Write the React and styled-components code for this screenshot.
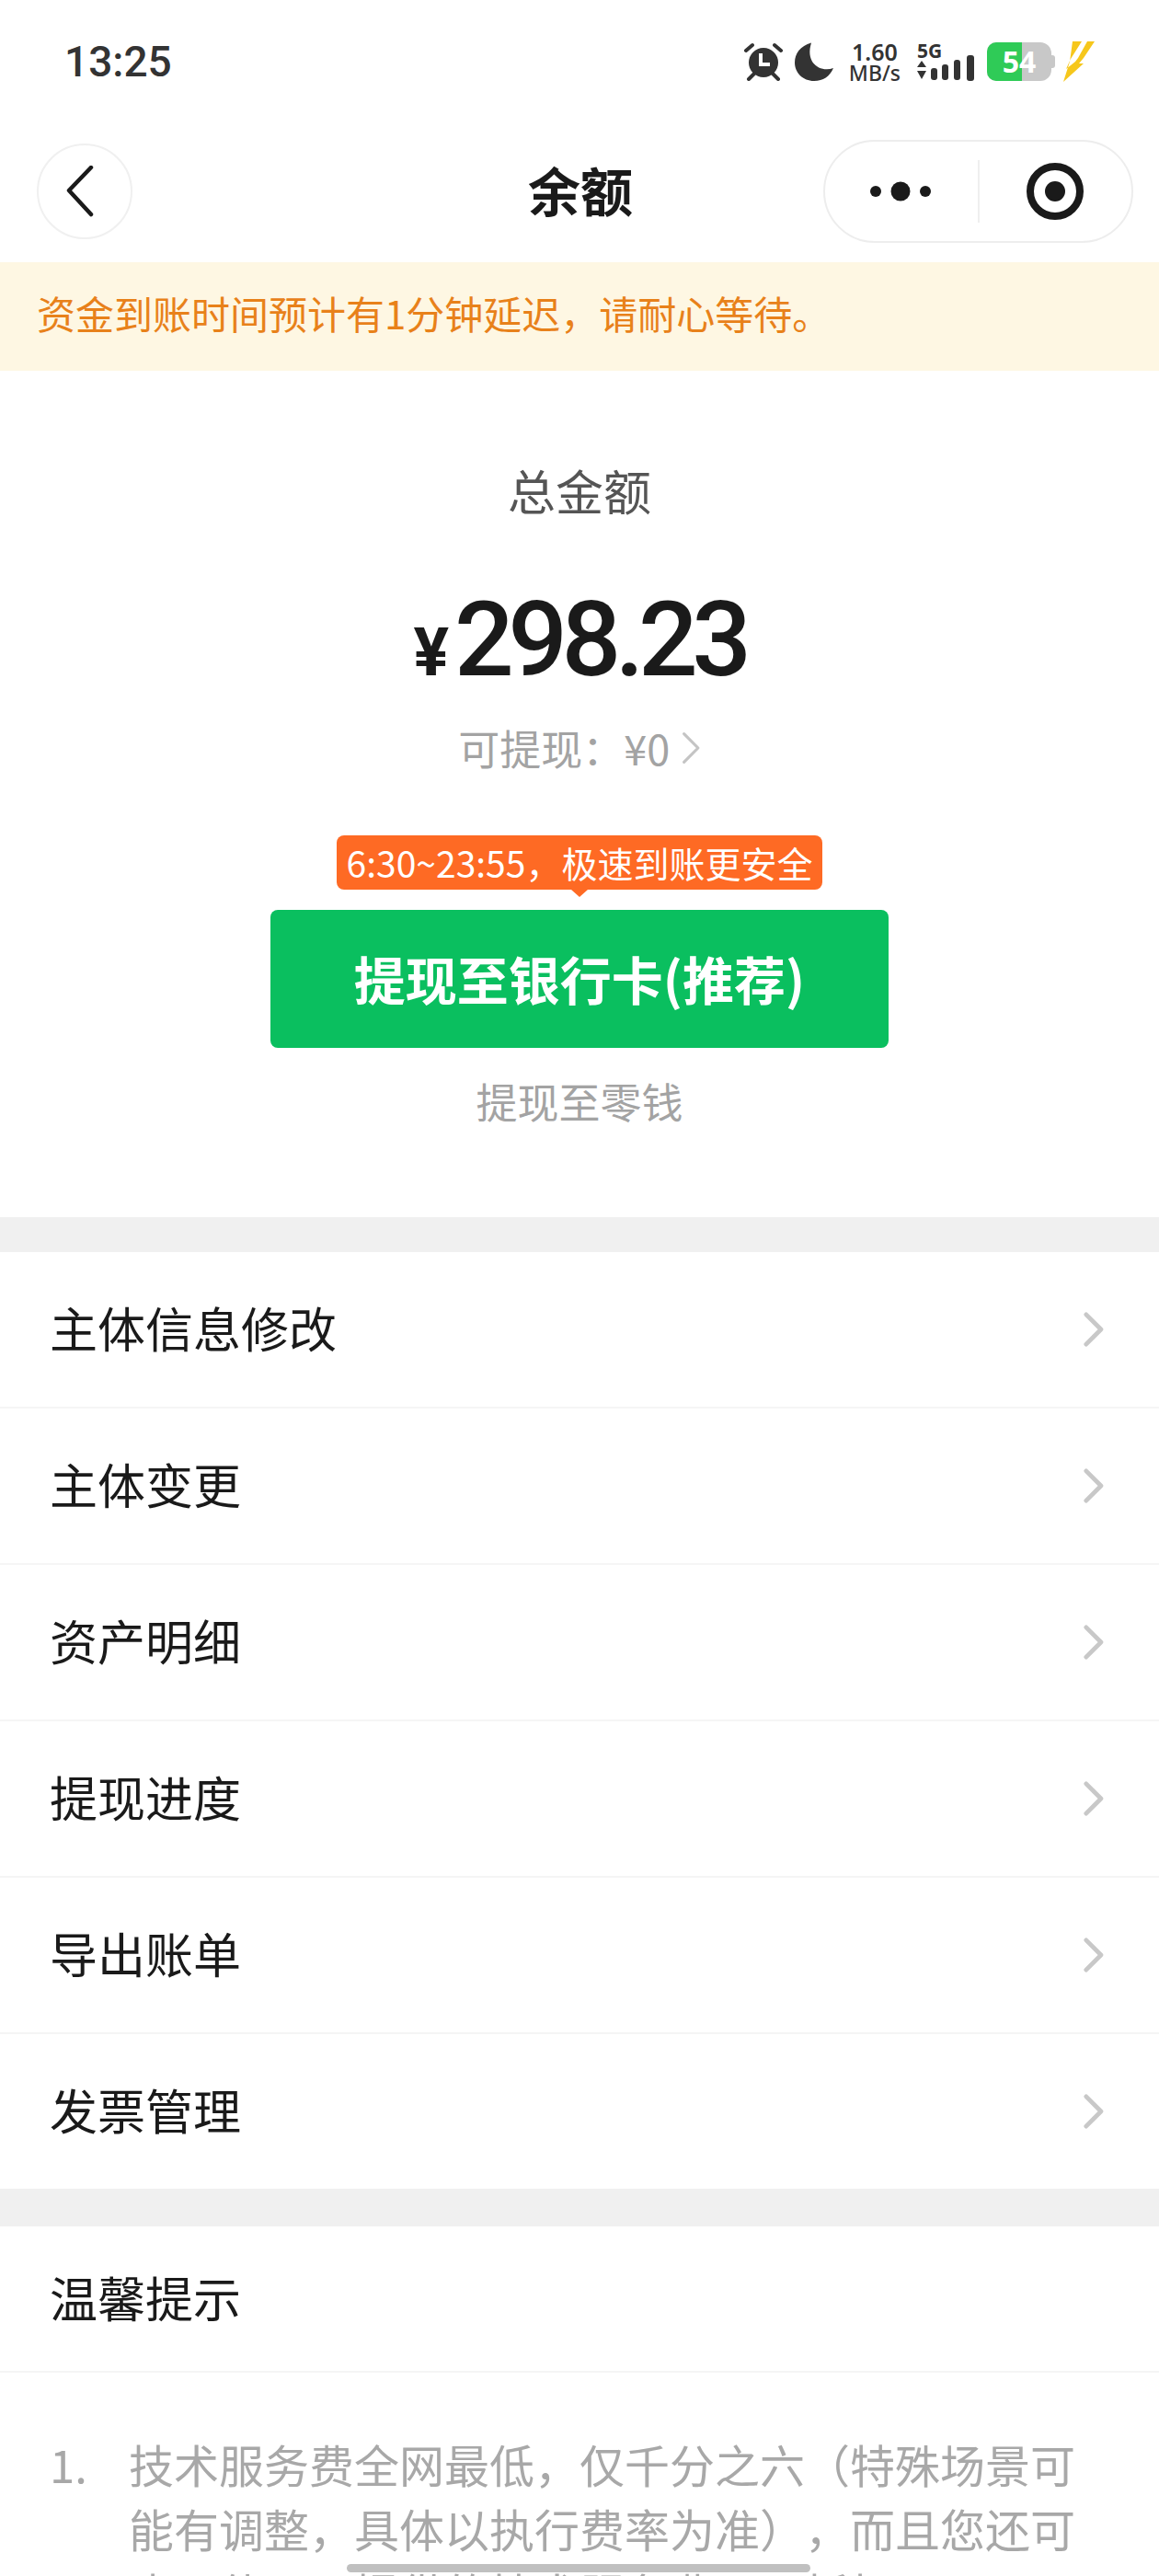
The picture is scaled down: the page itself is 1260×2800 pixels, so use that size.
import styled, { createGlobalStyle } from "styled-components";

const MENU_ITEMS = ["主体信息修改", "主体变更", "资产明细", "提现进度", "导出账单", "发票管理"];

const GlobalStyle = createGlobalStyle`
  html, body {
    margin: 0;
    padding: 0;
    background: #fff;
  }
  body {
    font-family: "Noto Sans CJK SC", "Noto Sans", sans-serif;
    text-spacing-trim: space-all;
  }
`;

const ChevronRight = ({ color = "#c8c8c8", size = 38, weight = 5 }) => (
  <svg width={size * 0.6} height={size} viewBox="0 0 24 40" fill="none">
    <path d="M4 3 L21 20 L4 37" stroke={color} strokeWidth={weight} strokeLinecap="round" strokeLinejoin="round" />
  </svg>
);

const AlarmIcon = () => (
  <svg width="42" height="42" viewBox="0 0 42 42">
    <circle cx="21" cy="22" r="16" fill="#333" />
    <path d="M18 12 V24 H28" fill="none" stroke="#fff" strokeWidth="4" />
    <path d="M2 9 L9 3 M40 9 L33 3 M5 40 L11 34 M37 40 L31 34" stroke="#333" strokeWidth="4" strokeLinecap="round" />
  </svg>
);

const MoonIcon = () => (
  <svg width="42" height="42" viewBox="0 0 42 42">
    <path d="M18 0.5 C6 4 0 12 0 22 C0 33 9 42 21 42 C31 42 38 37 42 28 C28 33 11 23 18 0.5 Z" fill="#333" />
  </svg>
);

const SignalIcon = () => (
  <svg width="63" height="28" viewBox="0 0 63 28">
    <path d="M5 6 L10 13 H0 Z M5 26 L10 17 H0 Z" fill="#333" />
    <rect x="15" y="14" width="7" height="13" rx="3" fill="#333" />
    <rect x="27" y="10" width="7" height="17" rx="3" fill="#333" />
    <rect x="40" y="5" width="7" height="22" rx="3" fill="#333" />
    <rect x="54" y="0" width="8" height="28" rx="3" fill="#333" />
  </svg>
);

const BoltIcon = () => (
  <svg width="34" height="44" viewBox="0 0 34 44">
    <path d="M10 0 H20 L8 19 L3 30 L13 22 L16 18 L26 0 H34 L22 18 L17 24 L22 24 L0 44 L7 22 Z" fill="#f6c71c" />
  </svg>
);

const MoreIcon = () => (
  <svg width="68" height="24" viewBox="0 0 68 24">
    <circle cx="6" cy="12" r="6" fill="#1a1a1a" />
    <circle cx="33" cy="12" r="10.5" fill="#1a1a1a" />
    <circle cx="60" cy="12" r="6" fill="#1a1a1a" />
  </svg>
);

const TargetIcon = () => (
  <svg width="62" height="62" viewBox="0 0 62 62">
    <circle cx="31" cy="31" r="27" fill="none" stroke="#1a1a1a" strokeWidth="8" />
    <circle cx="31" cy="31" r="11" fill="#1a1a1a" />
  </svg>
);

const BackIcon = () => (
  <svg width="30" height="56" viewBox="0 0 30 56">
    <path d="M27 2 L3 27 L27 53" fill="none" stroke="#1a1a1a" strokeWidth="4.5" strokeLinecap="round" strokeLinejoin="round" />
  </svg>
);

const App = () => (
  <Page>
    <GlobalStyle />
    <StatusBar>
      <Time>13:25</Time>
      <StatusIcons>
        <AlarmIcon />
        <MoonIcon />
        <Speed>
          <SpeedValue>1.60</SpeedValue>
          <SpeedUnit>MB/s</SpeedUnit>
        </Speed>
        <Network>
          <NetworkLabel>5G</NetworkLabel>
          <SignalIcon />
        </Network>
        <Battery>
          <BatteryFill />
          <BatteryLevel>54</BatteryLevel>
          <BatteryCap />
        </Battery>
        <BoltIcon />
      </StatusIcons>
    </StatusBar>

    <NavBar>
      <BackButton>
        <BackIcon />
      </BackButton>
      <NavTitle>余额</NavTitle>
      <Capsule>
        <CapsuleSlot>
          <MoreIcon />
        </CapsuleSlot>
        <CapsuleDivider />
        <CapsuleSlot>
          <TargetIcon />
        </CapsuleSlot>
      </Capsule>
    </NavBar>

    <Notice>资金到账时间预计有1分钟延迟，请耐心等待。</Notice>

    <Summary>
      <SummaryLabel>总金额</SummaryLabel>
      <Amount>
        <Currency>¥</Currency>
        298.23
      </Amount>
      <Withdrawable>
        可提现：¥0
        <ChevronRight color="#c4c4c4" size={36} weight={3.5} />
      </Withdrawable>
      <PromoBadge>6:30~23:55，极速到账更安全</PromoBadge>
      <PrimaryButton>提现至银行卡(推荐)</PrimaryButton>
      <SecondaryLink>提现至零钱</SecondaryLink>
    </Summary>

    <SectionGap />

    <Menu>
      {MENU_ITEMS.map((item) => (
        <MenuRow key={item}>
          <MenuLabel>{item}</MenuLabel>
          <ChevronRight />
        </MenuRow>
      ))}
    </Menu>

    <SectionGap $height={41} />

    <TipsHeader>
      <MenuLabel>温馨提示</MenuLabel>
    </TipsHeader>
    <TipsList>
      <TipIndex>1.</TipIndex>
      <TipText>技术服务费全网最低，仅千分之六（特殊场景可能有调整，具体以执行费率为准），而且您还可也可使用下提供的技术服务费用，抵扣</TipText>
    </TipsList>

    <HomeIndicator />
  </Page>
);

export default App;

const Page = styled.div`
  position: relative;
  width: 1260px;
  height: 2800px;
  overflow: hidden;
  background: #fff;
`;

const StatusBar = styled.div`
  display: flex;
  justify-content: space-between;
  align-items: center;
  height: 134px;
  padding: 0 70px 0 70px;
  box-sizing: border-box;
`;

const Time = styled.div`
  font-family: Roboto, sans-serif;
  font-size: 46px;
  font-weight: 500;
  color: #333;
`;

const StatusIcons = styled.div`
  display: flex;
  align-items: center;
  gap: 13px;
`;

const Speed = styled.div`
  display: flex;
  flex-direction: column;
  align-items: center;
  gap: 2px;
  font-family: "Noto Sans", sans-serif;
  color: #333;
  line-height: 1;
  margin-left: 4px;
`;

const SpeedValue = styled.span`
  font-size: 25px;
  font-weight: 600;
  line-height: 22px;
`;

const SpeedUnit = styled.span`
  font-size: 23px;
  font-weight: 500;
  line-height: 20px;
`;

const Network = styled.div`
  display: flex;
  flex-direction: column;
  align-items: flex-start;
  margin-left: 5px;
`;

const NetworkLabel = styled.span`
  font-family: "Noto Sans", sans-serif;
  font-size: 21px;
  font-weight: 700;
  color: #333;
  line-height: 16px;
  margin-bottom: -3px;
`;

const Battery = styled.div`
  position: relative;
  width: 70px;
  height: 42px;
  border-radius: 10px 12px 12px 10px;
  background: #c8c8c8;
  display: flex;
  align-items: center;
  justify-content: center;
`;

const BatteryFill = styled.div`
  position: absolute;
  left: 0;
  top: 0;
  bottom: 0;
  width: 38px;
  border-radius: 10px 0 0 10px;
  background: #2fcb57;
`;

const BatteryLevel = styled.span`
  position: relative;
  font-family: "Noto Sans", sans-serif;
  font-size: 32px;
  font-weight: 700;
  color: #fff;
  line-height: 1;
`;

const BatteryCap = styled.div`
  position: absolute;
  right: -4px;
  top: 14px;
  width: 4px;
  height: 14px;
  border-radius: 0 3px 3px 0;
  background: #c8c8c8;
`;

const NavBar = styled.div`
  display: grid;
  grid-template-columns: 1fr auto 1fr;
  align-items: center;
  height: 151px;
  padding: 0 28px 4px 40px;
  box-sizing: border-box;
`;

const BackButton = styled.div`
  display: flex;
  align-items: center;
  justify-content: center;
  width: 104px;
  height: 104px;
  box-sizing: border-box;
  border: 2px solid #f0f0f0;
  border-radius: 50%;
  padding-right: 10px;
`;

const NavTitle = styled.div`
  margin: 0 10px 5px 0;
  font-size: 57px;
  font-weight: 700;
  color: #1a1a1a;
  line-height: 1;
`;

const Capsule = styled.div`
  justify-self: end;
  display: flex;
  align-items: center;
  width: 337px;
  height: 112px;
  box-sizing: border-box;
  border: 2px solid #ededed;
  border-radius: 56px;
`;

const CapsuleSlot = styled.div`
  flex: 1 1 166px;
  display: flex;
  align-items: center;
  justify-content: center;
`;

const CapsuleDivider = styled.div`
  width: 2px;
  height: 68px;
  background: #efefef;
`;

const Notice = styled.div`
  display: flex;
  align-items: center;
  height: 118px;
  box-sizing: border-box;
  padding: 0 0 9px 40px;
  background: #fef7e3;
  color: #e8811a;
  font-size: 42px;
`;

const Summary = styled.div`
  display: flex;
  flex-direction: column;
  align-items: center;
  height: 920px;
  padding-top: 97px;
  box-sizing: border-box;
`;

const SummaryLabel = styled.div`
  font-size: 52px;
  line-height: 66px;
  color: #555;
`;

const Amount = styled.div`
  display: flex;
  align-items: baseline;
  margin-top: 64px;
  font-family: Roboto, sans-serif;
  font-size: 114px;
  font-weight: 500;
  letter-spacing: -6.5px;
  line-height: 130px;
  color: #1a1a1a;
`;

const Currency = styled.span`
  font-size: 72px;
  font-weight: 700;
  letter-spacing: 0;
  margin-right: 6px;
`;

const Withdrawable = styled.div`
  display: flex;
  align-items: center;
  gap: 12px;
  margin-top: 8px;
  font-size: 45px;
  line-height: 60px;
  color: #a3a3a3;
`;

const PromoBadge = styled.div`
  position: relative;
  margin-top: 65px;
  height: 59px;
  padding: 0 11px 2px;
  box-sizing: border-box;
  display: flex;
  align-items: center;
  background: #fe6a24;
  border-radius: 8px;
  color: #fff;
  font-size: 39px;
  white-space: nowrap;

  &::after {
    content: "";
    position: absolute;
    left: 50%;
    bottom: -8px;
    margin-left: -9px;
    border-left: 9px solid transparent;
    border-right: 9px solid transparent;
    border-top: 8px solid #fe6a24;
  }
`;

const PrimaryButton = styled.div`
  display: flex;
  align-items: center;
  justify-content: center;
  width: 672px;
  height: 150px;
  margin-top: 22px;
  padding-bottom: 4px;
  box-sizing: border-box;
  border-radius: 8px;
  background: #0abf5f;
  color: #fff;
  font-size: 56px;
  font-weight: 700;
`;

const SecondaryLink = styled.div`
  margin-top: 26px;
  font-size: 45px;
  line-height: 64px;
  color: #a3a3a3;
`;

const SectionGap = styled.div`
  height: ${(p) => p.$height || 38}px;
  background: #f0f0f0;
`;

const Menu = styled.div`
  display: flex;
  flex-direction: column;
`;

const MenuRow = styled.div`
  display: flex;
  align-items: center;
  justify-content: space-between;
  height: 170px;
  padding: 0 60px 0 54px;
  box-sizing: border-box;
  border-bottom: 2px solid #f5f5f5;
  font-size: 52px;
  color: #1a1a1a;

  &:last-child {
    height: 168px;
    border-bottom: none;
  }
`;

const MenuLabel = styled.span`
  margin-bottom: 5px;
`;

const TipsHeader = styled.div`
  display: flex;
  align-items: center;
  height: 159px;
  box-sizing: border-box;
  padding-left: 54px;
  border-bottom: 2px solid #f5f5f5;
  font-size: 52px;
  color: #1a1a1a;
`;

const TipsList = styled.div`
  display: flex;
  padding: 64px 70px 0 54px;
  font-size: 49px;
  line-height: 70px;
  color: #a8a8a8;
`;

const TipIndex = styled.span`
  flex: 0 0 86px;
`;

const TipText = styled.p`
  margin: 0;
`;

const HomeIndicator = styled.div`
  position: absolute;
  left: 377px;
  bottom: 4px;
  width: 504px;
  height: 9px;
  border-radius: 5px;
  background: #c0c0c0;
`;
